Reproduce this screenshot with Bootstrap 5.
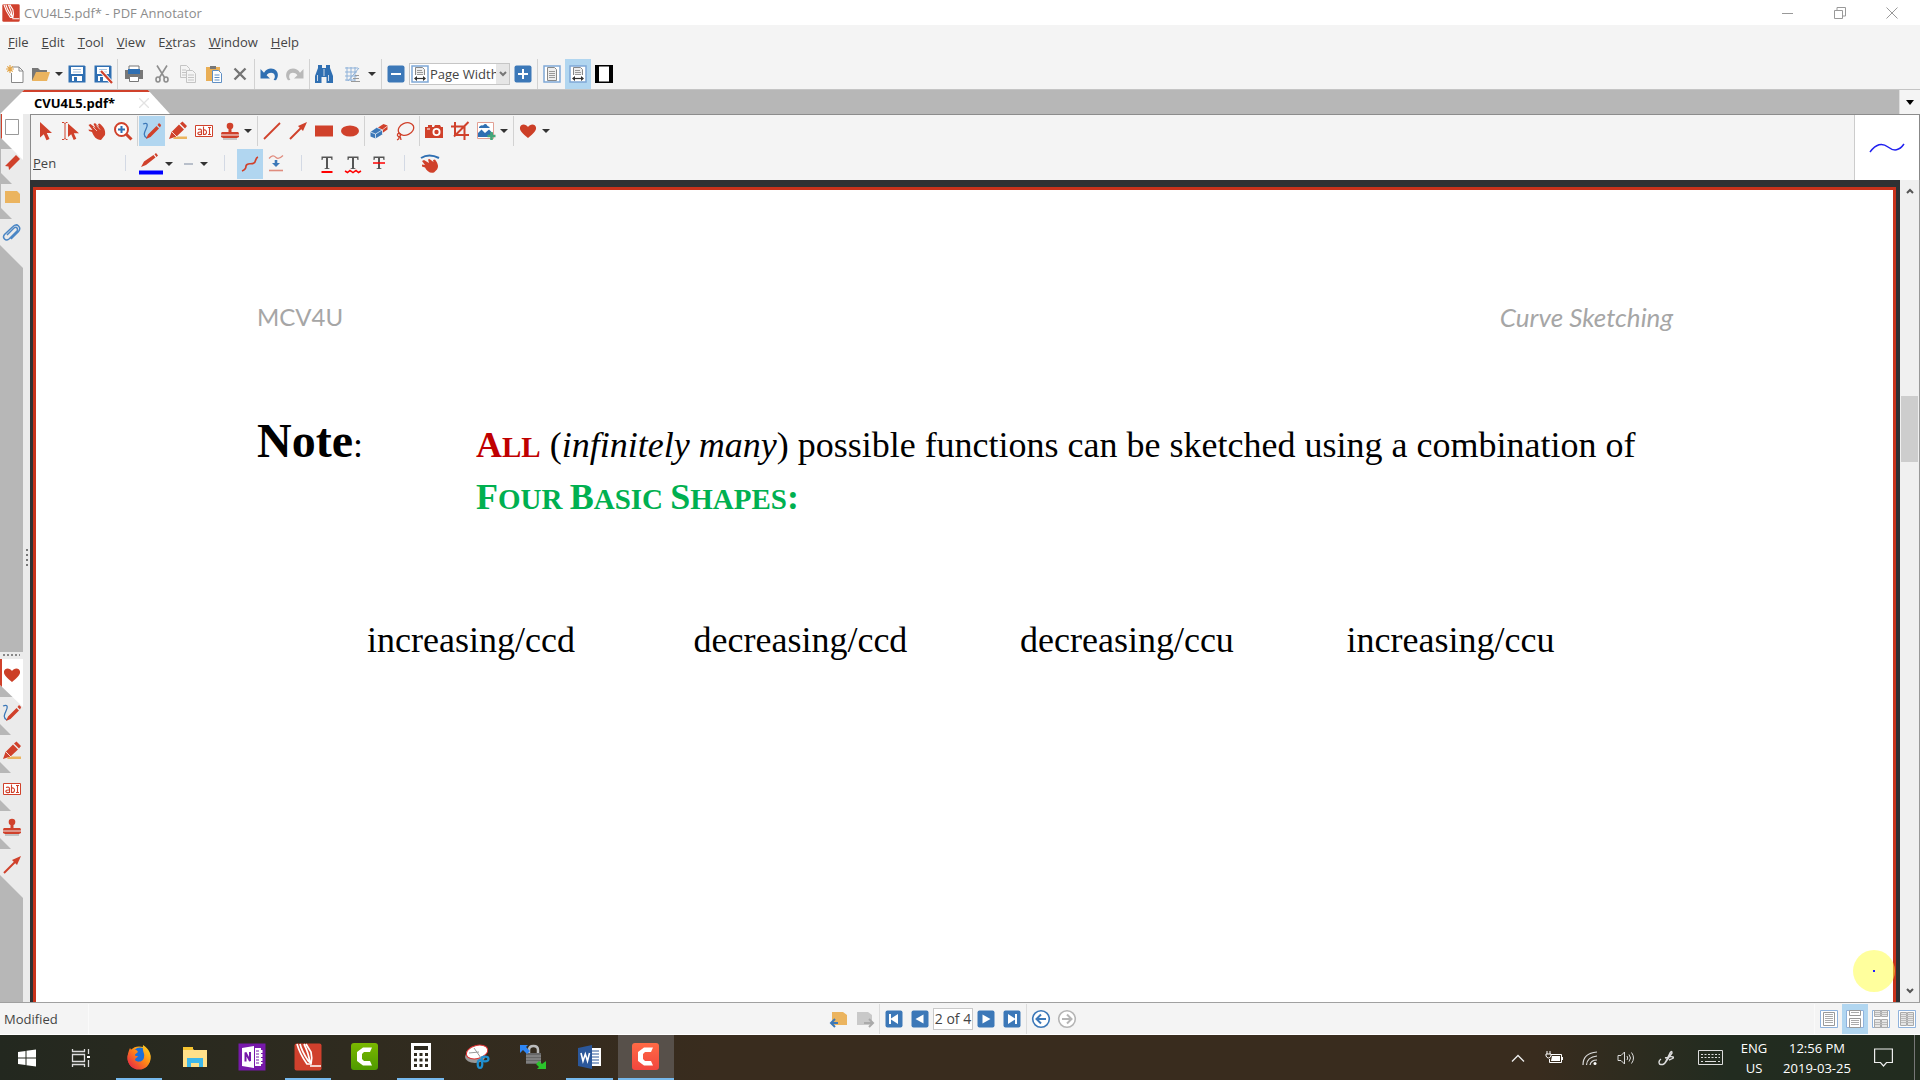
<!DOCTYPE html>
<html lang="en">
<head>
<meta charset="utf-8">
<meta name="viewport" content="width=device-width, initial-scale=1">
<title>CVU4L5.pdf* - PDF Annotator</title>
<link href="https://cdn.jsdelivr.net/npm/bootstrap@5.3.0/dist/css/bootstrap.min.css" rel="stylesheet">
<style>
  :root { --red:#d0412b; --blue:#3c78b8; --pane:#f4f4f4; --strip:#b7b7b7; --tabgrey:#ebebeb; --sel:#b1d6f0; }
  body { font-family:"Open Sans","Noto Sans",sans-serif; font-size:13px; line-height:20px; color:#444; background:var(--pane); }
  button { border:0; background:none; padding:0; color:inherit; }
  svg { display:block; flex:none; }
  .ic { width:20px; height:20px; }
  .titlebar { height:25px; color:#8c8c8c; padding:0 2px; }
  .winbtn { width:52px; height:25px; }
  .menubar { height:32px; padding:1px 8px 0; gap:13px; }
  .menubar a { color:#444; text-decoration:none; }
  .toolbar-main { height:33px; padding:2px 0 0 2px; border-bottom:1px solid #c4c4c4; }
  .tool { width:26px; height:30px; display:flex; align-items:center; justify-content:center; flex:none; }
  .tool.wide { width:30px; }
  .tool.slim { width:22px; }
  .tool.picked { background:var(--sel); }
  .drop { width:13px; height:30px; display:flex; align-items:center; padding-left:1px; flex:none; }
  .drop.near { width:10px; }
  .drop::after { content:""; border:4px solid transparent; border-top-color:#333; border-bottom:0; }
  .rule { width:1px; height:30px; margin:0 1px; background:#d2d2d2; flex:none; }
  .rule.short { height:16px; margin:0 12px; background:#d3d9e4; align-self:center; }
  .zoombox { width:101px; height:22px; border:1px solid #c6c6c6; background:#fff; }
  .zoombox select { appearance:none; border:0; background:none; padding:0; width:66px; color:#444; overflow:hidden; text-overflow:clip; outline:0; }
  .zoombox .arrow { background:#e6e6e6; width:14px; }
  .tabstrip { height:24px; background:var(--strip); }
  .doctab { width:170px; background:#fff; clip-path:polygon(0 100%,24px 0,148px 0,100% 100%); border-top:2px solid var(--red); padding-left:34px; color:#000; font-weight:700; }
  .striplist { width:21px; background:var(--pane); border-left:1px solid #ddd; }
  .sidebar { width:30px; background:var(--tabgrey); }
  .sidecol { width:23px; background:var(--strip); }
  .sidetab { width:23px; height:35px; padding:3px 0 0 2px; background:var(--tabgrey); clip-path:polygon(1px 0,100% 0,100% 100%,12px 100%,1px 24px); display:flex; align-items:flex-start; flex:none; }
  .sidetab.tall { height:38px; padding-top:6px; clip-path:polygon(0 0,100% 0,100% 100%,11px 100%,0 27px); }
  .sidetab.end { height:49px; clip-path:polygon(0 0,100% 0,100% 100%,0 26px); }
  .sidetab.front { height:46px; margin-bottom:-11px; background:#fff; border-left:2px solid var(--red); padding-left:0; z-index:1; clip-path:polygon(1px 0,100% 0,100% 100%,1px 24px); }
  .sidetab.tall.front { height:48px; margin-bottom:-10px; clip-path:polygon(0 0,100% 0,100% 100%,0 26px); }
  .favs { height:350px; }
  .dots { height:7px; background:var(--tabgrey); padding:2px 3px 0 3px; }
  .dots i { display:block; height:2px; background:repeating-linear-gradient(90deg,#888 0 2px,transparent 2px 4px); }
  .grip { width:2px; height:18px; background:repeating-linear-gradient(#777 0 2px,transparent 2px 5px); margin-left:3px; }
  .tools { border-top:1px solid #8c8c8c; border-left:1px solid #8c8c8c; height:66px; }
  .toolrow { height:32px; padding-left:1px; }
  .pen-name { width:81px; padding-left:1px; align-self:center; }
  .preview { width:66px; background:#fff; border-left:1px solid #ccc; border-right:1px solid #888; }
  .desk { background:#2f3133; padding:7px 4px 0 3px; }
  .sheet { background:#fff; border:3px solid #c8321b; border-bottom:0; padding:0 220px 0 221px; font-family:"Liberation Serif",serif; font-size:36px; line-height:52px; color:#000; }
  .sheet-head { font-family:Lato,sans-serif; font-size:26px; line-height:32px; color:#a6a6a6; padding-top:111px; }
  .course { font-size:24px; }
  .note { padding-top:82px; }
  .note-label { width:219px; flex:none; }
  .note-label b { font-size:48px; }
  .caps { font-weight:700; text-transform:uppercase; font-size:29px; line-height:32px; }
  .caps span { font-size:36px; }
  .in-red { color:#c00000; }
  .in-green { color:#00b050; }
  .shapes { padding:91px 0 0 110px; }
  .vscroll { width:20px; background:#f0f0f0; border-right:1px solid #999; }
  .thumb { height:66px; background:#cdcdcd; margin:202px 1px 0 1px; }
  .halo { position:absolute; right:25px; bottom:10px; width:42px; height:42px; border-radius:50%; background:rgba(255,255,60,.5); }
  .status { height:32px; border-top:1px solid #a0a0a0; }
  .status .rule { background:#dcdcdc; }
  .side { flex:1 1 0; }
  .side .rule { background:#fafafa; }
  .state { width:87px; }
  .pageno { width:40px; height:22px; border:1px solid #c9c9c9; padding:0; text-align:center; color:#444; background:#fff; font-size:14px; }
  .midgroup { margin-right:14px; }
  .taskbar { height:46px; border-top:1px solid #fff; color:#fff; background:linear-gradient(90deg,#23281f 0,#2f2b1f 18%,#392c1e 37%,#392c1e 80%,#222c20 90%,#222c1f 100%); }
  .tb-start { width:54px; }
  .apps { width:563px; margin-left:3px; }
  .app { flex:1 1 0; display:flex; align-items:center; justify-content:center; border-bottom:2px solid transparent; position:relative; }
  .app.open::after { content:""; position:absolute; left:5px; right:5px; bottom:-2px; height:2px; background:#76b9ed; }
  .app.current { background:#57504a; }
  .app.current::after { left:0; right:0; }
  .tray { width:36px; }
  .tray-wide { width:44px; }
  .clock { width:82px; }
  .notice { width:50px; }
  .peek { width:6px; border-left:1px solid #777; margin-left:6px; }
</style>
<script src="https://cdn.jsdelivr.net/npm/bootstrap@5.3.0/dist/js/bootstrap.bundle.min.js"></script>
</head>
<body class="vh-100 d-flex flex-column overflow-hidden">

<svg width="0" height="0" class="position-absolute" aria-hidden="true">
  <defs>
  <symbol id="logo" viewBox="0 0 28 28"><rect x=".5" y=".5" width="27" height="27" rx="2" fill="#d0402d"/><path d="M3 1c2 7 5 13 10 20h4c1-4 1-8 0-12L12 1M6 1c2 8 5 12 9 18M10 1c3 6 5 11 6 19M16 23h11" fill="none" stroke="#fff" stroke-width="1.7"/></symbol>
  <symbol id="new" viewBox="0 0 20 20"><path d="M7 3h7l4 4v11.500H6.500V9" fill="#fff" stroke="#888"/><path d="M14 3v4h4" fill="none" stroke="#888"/><path d="M5 1v8M1 5h8M2.300 2.300l5.400 5.400M7.700 2.300L2.300 7.700" stroke="#e3a548" stroke-width="1.200"/></symbol>
  <symbol id="open" viewBox="0 0 20 20"><path d="M1 17V4h6l2 2h7v3H7z" fill="#777"/><path d="M5 8h14l-3 9H1z" fill="#ebb45f"/></symbol>
  <symbol id="save" viewBox="0 0 20 20"><path d="M1.500 1.500h16l1 1v16h-17z" fill="#2f6fb2"/><path d="M4 3h12v7H4z" fill="#fff"/><path d="M6 5.500h8M6 8h8" stroke="#a9c4e0"/><path d="M5 12h10v5H5z" fill="#fff"/><path d="M7 13h3v4H7z" fill="#2f6fb2"/></symbol>
  <symbol id="print" viewBox="0 0 20 20"><path d="M5 2h10v4H5z" fill="#fff" stroke="#777"/><path d="M1 6h18v9H1z" fill="#777"/><path d="M4 5h12v5H4z" fill="#2f6fb2"/><path d="M5.500 12.500h9v5h-9z" fill="#fff" stroke="#777"/></symbol>
  <symbol id="cut" viewBox="0 0 20 20"><g fill="none" stroke="#8e8e8e" stroke-width="1.600"><path d="M5 1.500l7.500 12M15 1.500L7.500 13.500"/><ellipse cx="6" cy="15.500" rx="2" ry="2.500"/><ellipse cx="14" cy="15.500" rx="2" ry="2.500"/></g></symbol>
  <symbol id="copy" viewBox="0 0 20 20"><g fill="#f4f4f4" stroke="#c4c4c4"><path d="M2.500 1.500h6l3 3v9h-9z"/><path d="M8.500 6.500h6l3 3v9h-9z"/><path d="M10 11h6M10 13.500h6M10 16h6M4 6h4M4 8.500h4M4 11h4"/></g></symbol>
  <symbol id="paste" viewBox="0 0 20 20"><path d="M2 3h14v14H2z" fill="#e9ae55"/><path d="M6 2h6v3H6z" fill="#777"/><path d="M8.500 6.500h6l3 3v9h-9z" fill="#fff" stroke="#5f8fc4"/><path d="M10.500 11h5M10.500 13.500h5M10.500 16h5" stroke="#5f8fc4"/></symbol>
  <symbol id="del" viewBox="0 0 20 20"><path d="M4.500 4.500l11 11M15.500 4.500l-11 11" stroke="#757575" stroke-width="2.400"/></symbol>
  <symbol id="undo" viewBox="0 0 20 20"><path d="M1.500 5v9.500h9.500l-3.400-3.200c2.500-3.500 7-3 8-.3.600 2 0 3.500-1 5l2.400.3c2.500-3 2.400-7 .3-9.500C14 3.500 8 3.800 5 8.700z" fill="#2f6fb2"/></symbol>
  <symbol id="redo" viewBox="0 0 20 20"><path transform="matrix(-1 0 0 1 20 0)" d="M1.500 5v9.500h9.500l-3.400-3.200c2.500-3.500 7-3 8-.3.600 2 0 3.500-1 5l2.400.3c2.500-3 2.400-7 .3-9.500C14 3.500 8 3.800 5 8.700z" fill="#b9b9b9"/></symbol>
  <symbol id="bino" viewBox="0 0 20 20"><path d="M4 1h4v3h4V1h4v3l3 8v7h-6.500v-6h-5v6H1v-7l3-8z" fill="#2f6fb2"/><path d="M3.500 11v6M14.500 11v6M10 5v7" stroke="#f4f4f4" stroke-width=".8"/></symbol>
  <symbol id="grid" viewBox="0 0 20 20"><path d="M3 4h13M3 8h12M3 12h12M3 16h10M5 3v14M9 3v14M13 3v14M17 4L6 17" stroke="#8fb2d9" fill="none"/><path d="M9 17.500h9M11 14.500h6M13 11.500h4" stroke="#999"/></symbol>
  <symbol id="minus" viewBox="0 0 20 20"><rect x="1.500" y="1.500" width="17" height="17" rx="2" fill="#3c78b8"/><path d="M5 10h10" stroke="#fff" stroke-width="2"/></symbol>
  <symbol id="plus" viewBox="0 0 20 20"><rect x="1.500" y="1.500" width="17" height="17" rx="2" fill="#3c78b8"/><path d="M5 10h10M10 5v10" stroke="#fff" stroke-width="2"/></symbol>
  <symbol id="pgfull" viewBox="0 0 20 20"><path d="M2 2h16v16H2z" fill="#fff" stroke="#7fa8d6" stroke-width="1.500"/><path d="M5.500 3.500h7l2 2v11h-9z" fill="#eee" stroke="#888"/><path d="M7 7.500h6M7 9.500h6M7 11.500h6M7 13.500h6" stroke="#999"/></symbol>
  <symbol id="pgwidth" viewBox="0 0 20 20"><path d="M2 2h16v16H2z" fill="#fff" stroke="#7fa8d6" stroke-width="1.500"/><path d="M5.500 11V3.500h7l2 2V11" fill="#eee" stroke="#888"/><path d="M7 6.500h5M7 8.500h6M7 10.500h6" stroke="#999"/><path d="M5 14.500h10" stroke="#333" stroke-width="1.200"/><path d="M4 14.500l3-2.500v5zM16 14.500l-3-2.500v5z" fill="#333"/></symbol>
  <symbol id="screen" viewBox="0 0 20 20"><path d="M1 1h18v18H1z" fill="#000"/><path d="M5 2.500h10v15H5z" fill="#fff"/></symbol>
  <symbol id="arrow" viewBox="0 0 20 20"><path d="M5 1v15.500l3.800-3.300 2.700 6 3-1.200-2.700-6H17z" fill="#d0412b"/></symbol>
  <symbol id="tarrow" viewBox="0 0 20 20"><path d="M1 1.500h2l1 1 1-1h1.500M1 18.500h2l1-1 1 1h1.500M4 2v16" stroke="#d0412b" fill="none"/><path d="M7 2.500V16l3.200-2.800 2.500 5.800 2.600-1.200-2.500-5.600h5.200z" fill="#d0412b"/></symbol>
  <symbol id="hand" viewBox="0 0 20 20"><path d="M1.500 4l2-1 5 4-2-4 1.500-1 4 4-1-3 1.500-.5C16 5 19 9 18 14l-4 5c-5-.5-7-3-9-8l-3-1-.5-1.500 4 .5z" fill="#d0412b"/><path d="M6 6l4 4M9.500 4.500l3.500 4" stroke="#f4f4f4" stroke-width=".7"/></symbol>
  <symbol id="zoomin" viewBox="0 0 20 20"><circle cx="8.500" cy="8.500" r="6.500" fill="#fff" stroke="#d0412b" stroke-width="2"/><path d="M13 13l5.500 5.500" stroke="#d0412b" stroke-width="3"/><path d="M5 8.500h7M8.500 5v7" stroke="#2f6fb2" stroke-width="2"/></symbol>
  <symbol id="pen" viewBox="0 0 20 20"><path d="M1 3c5-2 5 1 3 5s-3 7 1 9" fill="none" stroke="#3c78b8" stroke-width="1.300"/><path d="M4 18l2-4.500L14.500 5l2.500 2.500-8.500 8.500zM15.500 4L17 2l2.200 2L18 6.500z" fill="#d0412b"/></symbol>
  <symbol id="marker" viewBox="0 0 20 20"><path d="M7 15.500h12v2.500H5z" fill="#ebb45f"/><path d="M1 18l2.500-7L11 3.500l5 5-7.500 7zM12 2.500l2.500-2L19 5l-2 2.500z" fill="#d0412b"/><path d="M4 11l5 5" stroke="#fff" stroke-width=".8"/></symbol>
  <symbol id="ab" viewBox="0 0 20 20"><path d="M1.500 4.500h17v11h-17z" fill="#fff" stroke="#d0412b"/><g fill="none" stroke="#d0412b" stroke-width="1.100"><path d="M4 8.500c2.500-1 3.500 0 3.500 1.500v3.500c-5 .8-5-3 0-2.500M9.500 5.500v8c4 .8 4-5.500 0-4.500M14 6.500h3M14 13.500h3M15.500 6.500v7"/></g></symbol>
  <symbol id="stamp" viewBox="0 0 20 20"><circle cx="10" cy="5" r="3.300" fill="#d0412b"/><path d="M8.500 7h3v4H18q1 0 1 2.500H1Q1 11 2 11h6.500zM1 14.500h18V16l-2 1H3l-2-1z" fill="#d0412b"/><path d="M3 17.500h14v1H3z" fill="#999"/></symbol>
  <symbol id="line" viewBox="0 0 20 20"><path d="M2 18L18 2" stroke="#d0412b" stroke-width="1.800"/></symbol>
  <symbol id="arr" viewBox="0 0 20 20"><path d="M2 18L14 6" stroke="#d0412b" stroke-width="2"/><path d="M10 5l9-4-4 9z" fill="#d0412b"/></symbol>
  <symbol id="rect" viewBox="0 0 20 20"><path d="M1 4.500h18v11H1z" fill="#d0412b"/></symbol>
  <symbol id="ell" viewBox="0 0 20 20"><ellipse cx="10" cy="10" rx="9" ry="5.500" fill="#d0412b"/></symbol>
  <symbol id="eraser" viewBox="0 0 20 20"><path d="M9 6.500L14.500 3l4 1.500v4L12 13z" fill="#d0412b"/><path d="M1.500 11L8 6.500l5.500 2.300v4.400L6.500 17.500l-5-2z" fill="#3c78b8"/><path d="M1.500 11l5 2 7-4.200 5-3.800M6.500 13v4.500M8 6.500L13.500 9v4" stroke="#fff" stroke-width=".7" fill="none"/></symbol>
  <symbol id="lasso" viewBox="0 0 20 20"><g fill="none" stroke="#d0412b" stroke-width="1.300"><ellipse cx="11" cy="8" rx="8" ry="6" transform="rotate(-25 11 8)"/><circle cx="4" cy="14" r="1.600"/><path d="M4 16c0 2 0 2-2 3M4 15c2 1 2 2 2 4"/></g></symbol>
  <symbol id="camera" viewBox="0 0 20 20"><path d="M1 6h3V4h4v2h2l1-2h5l1 2h2v11H1z" fill="#d0412b"/><circle cx="12.500" cy="11" r="4" fill="#fff"/><circle cx="12.500" cy="11" r="2.200" fill="#d0412b"/><path d="M3 8h3" stroke="#fff"/></symbol>
  <symbol id="crop" viewBox="0 0 20 20"><path d="M5 1v13h14M1 5.500h13.500V19M4 15.500L18.500 1" fill="none" stroke="#d0412b" stroke-width="2"/></symbol>
  <symbol id="image" viewBox="0 0 20 20"><path d="M1.500 1.500h16v16h-16z" fill="#fff" stroke="#e2a094"/><path d="M3 6q2-2.500 4-1.500 3-3 4.500.5l2 1v1H3zM2 16v-4l3.500-3.500L9 12l4-3.500 4 4V16z" fill="#2f6fb2"/><path d="M15.500 11v8M11.500 15h8" stroke="#44a678" stroke-width="2.600"/></symbol>
  <symbol id="heart" viewBox="0 0 20 20"><path d="M10 17C4 12 1.500 9.500 2 6.500 2.500 2.500 8 2.500 10 6c2-3.500 7.500-3.500 8 .5C18.500 9.500 16 12 10 17z" fill="#cc3f27"/></symbol>
  <symbol id="pencolor" viewBox="0 0 26 24"><path d="M3 15l3-5.500L15.500 3l2 2.500L8 13zM16.500 2.200L18 1l2 2.500L18.500 5z" fill="#d0412b"/><path d="M1 18.500h24v4H1z" fill="#0000fe"/></symbol>
  <symbol id="smooth" viewBox="0 0 20 20"><path d="M2 17c3-1 4-3 4-5 1-4 5-1 8-3 2-1 1-5 4-6" fill="none" stroke="#d0412b" stroke-width="1.700"/></symbol>
  <symbol id="press" viewBox="0 0 20 20"><path d="M3 4.500c3-3.500 5-3 7-1s4 1 7-2" fill="none" stroke="#e08c7e" stroke-width="1.200"/><path d="M8.700 6h2.600v3H14l-4 4-4-4h2.700z" fill="#3c78b8"/><path d="M3 16.500h14" stroke="#e08c7e" stroke-width="1.600"/></symbol>
  <symbol id="tee" viewBox="0 0 20 20"><path d="M4.500 2.500h11V6h-1l-.5-2h-3v10l1.500.5v.5h-5v-.5L9 14V4H6l-.5 2h-1z" fill="#555"/></symbol>
  <symbol id="touch" viewBox="0 0 20 20"><path d="M1 4Q9-1 19 4" fill="none" stroke="#2f6fb2" stroke-width="2"/><path d="M2 7l2-1 5 3-1-3.500 1.500-.5 4 3-.5-2 2-.5c3 4 4 7 2 10l-3 3c-4 1-7-1-9-5l-3-1 0-2 3 .5z" fill="#d0412b"/></symbol>
  <symbol id="thumbs" viewBox="0 0 20 20"><path d="M3.500 2.500h13v15h-13z" fill="#fff" stroke="#999"/></symbol>
  <symbol id="bookmark" viewBox="0 0 20 20"><path d="M3 14L14 3l4 4L7 18l-.5-3.500z" fill="#d0412b"/></symbol>
  <symbol id="memo" viewBox="0 0 20 20"><path d="M3 4h12l3 3v9H3z" fill="#ebb45f"/></symbol>
  <symbol id="clip" viewBox="0 0 20 20"><path d="M5 13l7-7q2-1.500 3 0t0 3l-8 8q-2.500 2-4.500 0t0-4.500L11 4.500q3-3 5.500-.5t0 5.500L9 17" fill="none" stroke="#4a86c5" stroke-width="1.500"/></symbol>
  <symbol id="note-prev" viewBox="0 0 20 20"><path d="M3 3h11l4 3v10H3z" fill="#ebb45f"/><path d="M9 14H3M6 10l-4 4 4 4" fill="none" stroke="#3c78b8" stroke-width="2"/></symbol>
  <symbol id="note-next" viewBox="0 0 20 20"><path d="M2 3h11l4 3v10H2z" fill="#c9c9c9"/><path d="M9 14h8M14 10l4 4-4 4" fill="none" stroke="#aaa" stroke-width="2"/></symbol>
  <symbol id="first" viewBox="0 0 20 20"><rect x="1.500" y="1.500" width="17" height="17" rx="2" fill="#3c78b8"/><path d="M5 5h2v4.500L14 5v10l-7-4.500V15H5z" fill="#fff"/></symbol>
  <symbol id="prev" viewBox="0 0 20 20"><rect x="1.500" y="1.500" width="17" height="17" rx="2" fill="#3c78b8"/><path d="M5.500 10l8-4.500v9z" fill="#fff"/></symbol>
  <symbol id="back" viewBox="0 0 20 20"><circle cx="10" cy="10" r="8.300" fill="#fff" stroke="currentColor" stroke-width="1.600"/><path d="M15 10H6M10 5.500L5.500 10l4.500 4.500" fill="none" stroke="currentColor" stroke-width="2"/></symbol>
  <symbol id="v1" viewBox="0 0 20 20"><path d="M1.500 1.500h17v17h-17z" fill="#fff" stroke="#8fb2dc"/><path d="M4.500 3.500h11v13h-11z" fill="#fff" stroke="#999"/><path d="M6 5.500h8M6 7.500h8M6 9.500h8M6 11.500h8M6 13.500h8" stroke="#aaa"/></symbol>
  <symbol id="v2" viewBox="0 0 20 20"><path d="M1.500 1.500h17v17h-17z" fill="#fff" stroke="#8fb2dc"/><path d="M4.500 1.500h11v5h-11zM4.500 9.500h11v9h-11z" fill="#fff" stroke="#999"/><path d="M6 3.500h8M6 11.500h8M6 13.500h8M6 15.500h8" stroke="#aaa"/></symbol>
  <symbol id="v3" viewBox="0 0 20 20"><path d="M1.500 1.500h17v17h-17z" fill="#fff" stroke="#8fb2dc"/><path d="M3.500 1.500h6v6h-6zM10.500 1.500h6v6h-6zM3.500 10.500h6v8h-6zM10.500 10.500h6v8h-6z" fill="#e6e6e6" stroke="#aaa"/><path d="M4 3.500h12M4 5.500h12M4 13.500h12M4 15.500h12" stroke="#bbb"/></symbol>
  <symbol id="v4" viewBox="0 0 20 20"><path d="M1.500 1.500h17v17h-17z" fill="#fff" stroke="#8fb2dc"/><path d="M3.500 3.500h6v13h-6zM10.500 3.500h6v13h-6z" fill="#e6e6e6" stroke="#aaa"/><path d="M4 5.500h12M4 7.500h12M4 9.500h12M4 11.500h12M4 13.500h12" stroke="#bbb"/></symbol>
  <linearGradient id="fox" x1="1" y1="0" x2="0" y2="1"><stop offset="0" stop-color="#ffe226"/><stop offset=".45" stop-color="#ff8a16"/><stop offset="1" stop-color="#e3174f"/></linearGradient>
  <linearGradient id="camg" x1="0" y1="0" x2="0" y2="1"><stop offset="0" stop-color="#7ab800"/><stop offset="1" stop-color="#4f9a00"/></linearGradient>
  <linearGradient id="camr" x1="0" y1="0" x2="0" y2="1"><stop offset="0" stop-color="#ff6a45"/><stop offset="1" stop-color="#f2463e"/></linearGradient>
  </defs>
</svg>

<header class="titlebar bg-white d-flex align-items-center">
  <svg width="18" height="18"><use href="#logo"/></svg>
  <span class="ms-1 me-auto">CVU4L5.pdf* - PDF Annotator</span>
  <button class="winbtn d-flex align-items-center justify-content-center" aria-label="Minimize"><svg width="12" height="12" stroke="#999"><path d="M0 6.500h11"/></svg></button>
  <button class="winbtn d-flex align-items-center justify-content-center" aria-label="Restore"><svg width="12" height="12" fill="none" stroke="#999"><path d="M.5 3.500h8v8h-8zM3 3V.5h8.500V9H9"/></svg></button>
  <button class="winbtn d-flex align-items-center justify-content-center" aria-label="Close"><svg width="12" height="12" stroke="#999"><path d="M.5.5l11 11M11.500.5l-11 11"/></svg></button>
</header>

<nav class="menubar d-flex align-items-center" aria-label="Menu">
  <a href="#"><u>F</u>ile</a><a href="#"><u>E</u>dit</a><a href="#"><u>T</u>ool</a><a href="#"><u>V</u>iew</a><a href="#">E<u>x</u>tras</a><a href="#"><u>W</u>indow</a><a href="#"><u>H</u>elp</a>
</nav>

<div class="toolbar-main d-flex align-items-center" role="toolbar" aria-label="Standard">
  <button class="tool" aria-label="New"><svg class="ic"><use href="#new"/></svg></button>
  <button class="tool" aria-label="Open"><svg class="ic"><use href="#open"/></svg></button>
  <button class="drop near" aria-label="Recent files"></button>
  <button class="tool" aria-label="Save"><svg class="ic"><use href="#save"/></svg></button>
  <button class="tool" aria-label="Save as"><svg class="ic" viewBox="0 0 20 20"><use href="#save"/><path d="M8 7l10 11" stroke="#fff" stroke-width="4"/><path d="M8 7l11 12" stroke="#d0412b" stroke-width="2.200"/></svg></button>
  <span class="rule"></span>
  <button class="tool wide" aria-label="Print"><svg class="ic"><use href="#print"/></svg></button>
  <button class="tool" aria-label="Cut"><svg class="ic"><use href="#cut"/></svg></button>
  <button class="tool" aria-label="Copy"><svg class="ic"><use href="#copy"/></svg></button>
  <button class="tool" aria-label="Paste"><svg class="ic"><use href="#paste"/></svg></button>
  <button class="tool" aria-label="Delete"><svg class="ic"><use href="#del"/></svg></button>
  <span class="rule"></span>
  <button class="tool" aria-label="Undo"><svg class="ic"><use href="#undo"/></svg></button>
  <button class="tool" aria-label="Redo"><svg class="ic"><use href="#redo"/></svg></button>
  <span class="rule"></span>
  <button class="tool" aria-label="Find"><svg class="ic"><use href="#bino"/></svg></button>
  <button class="tool wide" aria-label="Grid"><svg class="ic"><use href="#grid"/></svg></button>
  <button class="drop" aria-label="Grid options"></button>
  <span class="rule"></span>
  <button class="tool" aria-label="Zoom out"><svg class="ic"><use href="#minus"/></svg></button>
  <div class="zoombox d-flex align-items-center">
    <svg class="ic"><use href="#pgwidth"/></svg>
    <select aria-label="Zoom"><option>Page Width</option></select>
    <span class="arrow h-100 d-flex align-items-center justify-content-center"><svg width="8" height="6" fill="none" stroke="#777" stroke-width="2"><path d="M1 1l3 3 3-3"/></svg></span>
  </div>
  <button class="tool" aria-label="Zoom in"><svg class="ic"><use href="#plus"/></svg></button>
  <span class="rule"></span>
  <button class="tool" aria-label="Full page"><svg class="ic"><use href="#pgfull"/></svg></button>
  <button class="tool picked" aria-label="Page width"><svg class="ic"><use href="#pgwidth"/></svg></button>
  <button class="tool" aria-label="Full screen"><svg class="ic"><use href="#screen"/></svg></button>
</div>

<div class="tabstrip d-flex">
  <a href="#" class="doctab d-flex align-items-center text-decoration-none">CVU4L5.pdf*
    <svg class="ms-4" width="10" height="10" stroke="#e2e2e2" stroke-width="1.300"><path d="M0 0l10 10M10 0L0 10"/></svg></a>
  <button class="striplist ms-auto d-flex align-items-center justify-content-center" aria-label="Document list"><svg width="8" height="5"><path d="M0 0h8L4 5z"/></svg></button>
</div>

<div class="d-flex flex-grow-1 overflow-hidden">
  <aside class="sidebar d-flex flex-shrink-0 align-items-center">
    <div class="sidecol h-100 d-flex flex-column">
      <button class="sidetab front" aria-label="Pages"><svg class="ic"><use href="#thumbs"/></svg></button>
      <button class="sidetab" aria-label="Bookmarks"><svg class="ic"><use href="#bookmark"/></svg></button>
      <button class="sidetab" aria-label="Annotations"><svg class="ic"><use href="#memo"/></svg></button>
      <button class="sidetab end" aria-label="Attachments"><svg class="ic"><use href="#clip"/></svg></button>
      <div class="favs mt-auto d-flex flex-column">
        <div class="dots"><i></i></div>
        <button class="sidetab tall front" aria-label="Favorites"><svg class="ic"><use href="#heart"/></svg></button>
        <button class="sidetab tall" aria-label="Pen"><svg class="ic"><use href="#pen"/></svg></button>
        <button class="sidetab tall" aria-label="Marker"><svg class="ic"><use href="#marker"/></svg></button>
        <button class="sidetab tall" aria-label="Text"><svg class="ic"><use href="#ab"/></svg></button>
        <button class="sidetab tall" aria-label="Stamp"><svg class="ic"><use href="#stamp"/></svg></button>
        <button class="sidetab tall end" aria-label="Arrow"><svg class="ic"><use href="#arr"/></svg></button>
      </div>
    </div>
    <span class="grip"></span>
  </aside>

  <div class="d-flex flex-column flex-grow-1">
    <div class="tools d-flex flex-shrink-0">
      <div class="flex-grow-1">
        <div class="toolrow d-flex align-items-center" role="toolbar" aria-label="Tools">
          <button class="tool" aria-label="Select"><svg class="ic"><use href="#arrow"/></svg></button>
          <button class="tool" aria-label="Select text"><svg class="ic"><use href="#tarrow"/></svg></button>
          <button class="tool" aria-label="Pan"><svg class="ic"><use href="#hand"/></svg></button>
          <button class="tool" aria-label="Magnify"><svg class="ic"><use href="#zoomin"/></svg></button>
          <span class="rule"></span>
          <button class="tool picked" aria-label="Pen"><svg class="ic"><use href="#pen"/></svg></button>
          <button class="tool" aria-label="Marker"><svg class="ic"><use href="#marker"/></svg></button>
          <button class="tool" aria-label="Text"><svg class="ic"><use href="#ab"/></svg></button>
          <button class="tool" aria-label="Stamp"><svg class="ic"><use href="#stamp"/></svg></button>
          <button class="drop" aria-label="Stamps"></button>
          <span class="rule"></span>
          <button class="tool" aria-label="Line"><svg class="ic"><use href="#line"/></svg></button>
          <button class="tool" aria-label="Arrow"><svg class="ic"><use href="#arr"/></svg></button>
          <button class="tool" aria-label="Rectangle"><svg class="ic"><use href="#rect"/></svg></button>
          <button class="tool" aria-label="Ellipse"><svg class="ic"><use href="#ell"/></svg></button>
          <span class="rule"></span>
          <button class="tool" aria-label="Eraser"><svg class="ic"><use href="#eraser"/></svg></button>
          <button class="tool" aria-label="Lasso"><svg class="ic"><use href="#lasso"/></svg></button>
          <span class="rule"></span>
          <button class="tool" aria-label="Snapshot"><svg class="ic"><use href="#camera"/></svg></button>
          <button class="tool" aria-label="Crop"><svg class="ic"><use href="#crop"/></svg></button>
          <button class="tool" aria-label="Insert image"><svg class="ic"><use href="#image"/></svg></button>
          <button class="drop" aria-label="Image options"></button>
          <span class="rule"></span>
          <button class="tool" aria-label="Favorites"><svg class="ic"><use href="#heart"/></svg></button>
          <button class="drop" aria-label="Favorite tools"></button>
        </div>
        <div class="toolrow d-flex align-items-end" role="toolbar" aria-label="Pen options">
          <span class="pen-name"><u>P</u>en</span>
          <span class="rule short"></span>
          <button class="tool" aria-label="Color"><svg width="26" height="24"><use href="#pencolor"/></svg></button>
          <button class="drop" aria-label="Colors"></button>
          <button class="tool slim" aria-label="Width"><svg width="9" height="3"><path d="M0 0h9v2H0z" fill="#b8bfca"/></svg></button>
          <button class="drop" aria-label="Widths"></button>
          <span class="rule short"></span>
          <button class="tool picked" aria-label="Smooth"><svg class="ic"><use href="#smooth"/></svg></button>
          <button class="tool" aria-label="Pressure"><svg class="ic"><use href="#press"/></svg></button>
          <span class="rule short"></span>
          <button class="tool" aria-label="Underline"><svg class="ic" viewBox="0 0 20 20"><use href="#tee"/><path d="M4.500 18h11" stroke="#f00" stroke-width="2"/></svg></button>
          <button class="tool" aria-label="Wavy underline"><svg class="ic" viewBox="0 0 20 20"><use href="#tee"/><path d="M2 17l2.500 1.500L7 16.500l3 2 3-2 2.500 2L18 17" stroke="#f00" stroke-width="1.500" fill="none"/></svg></button>
          <button class="tool" aria-label="Strike out"><svg class="ic" viewBox="0 0 20 20"><use href="#tee"/><path d="M4 9h12" stroke="#f00" stroke-width="1.500"/></svg></button>
          <span class="rule short"></span>
          <button class="tool" aria-label="Touch"><svg class="ic"><use href="#touch"/></svg></button>
        </div>
      </div>
      <div class="preview d-flex align-items-center justify-content-center"><svg width="36" height="12" fill="none" stroke="#2020f0" stroke-width="1.500"><path d="M1 10Q10-2 19 5t16-3"/></svg></div>
    </div>

    <div class="d-flex flex-grow-1 overflow-hidden position-relative">
      <main class="desk flex-grow-1 d-flex">
        <article class="sheet flex-grow-1">
          <div class="sheet-head d-flex justify-content-between"><span class="course">MCV4U</span><em>Curve Sketching</em></div>
          <div class="note d-flex align-items-baseline">
            <div class="note-label"><b>Note</b>:</div>
            <div><span class="caps in-red"><span>A</span>ll</span> (<i>infinitely many</i>) possible functions can be sketched using a combination of<br><span class="caps in-green"><span>F</span>our <span>B</span>asic <span>S</span>hapes<span>:</span></span></div>
          </div>
          <div class="shapes"><div class="row g-0">
            <div class="col-3">increasing/ccd</div><div class="col-3">decreasing/ccd</div><div class="col-3">decreasing/ccu</div><div class="col-3">increasing/ccu</div>
          </div></div>
        </article>
      </main>
      <div class="vscroll d-flex flex-column flex-shrink-0">
        <svg class="mx-auto mt-2" width="8" height="6" fill="none" stroke="#555" stroke-width="2"><path d="M1 5l3-3 3 3"/></svg>
        <div class="thumb"></div>
        <svg class="mx-auto mt-auto mb-2" width="8" height="6" fill="none" stroke="#555" stroke-width="2"><path d="M1 1l3 3 3-3"/></svg>
      </div>
      <div class="halo d-flex align-items-center justify-content-center"><svg width="2" height="2"><path d="M0 0h2v2H0z" fill="#22f"/></svg></div>
    </div>
  </div>
</div>

<footer class="status d-flex align-items-center flex-shrink-0">
  <div class="side d-flex align-items-center"><span class="state ps-1">Modified</span><span class="rule"></span></div>
  <div class="midgroup d-flex align-items-center">
    <button class="tool" aria-label="Previous annotated page"><svg class="ic"><use href="#note-prev"/></svg></button>
    <button class="tool" aria-label="Next annotated page"><svg class="ic"><use href="#note-next"/></svg></button>
    <span class="rule"></span>
    <button class="tool" aria-label="First page"><svg class="ic"><use href="#first"/></svg></button>
    <button class="tool" aria-label="Previous page"><svg class="ic"><use href="#prev"/></svg></button>
    <input class="pageno" aria-label="Page" value="2 of 4">
    <button class="tool" aria-label="Next page"><svg class="ic" viewBox="0 0 20 20"><use href="#prev" transform="rotate(180 10 10)"/></svg></button>
    <button class="tool" aria-label="Last page"><svg class="ic" viewBox="0 0 20 20"><use href="#first" transform="rotate(180 10 10)"/></svg></button>
    <span class="rule"></span>
    <button class="tool" aria-label="Back"><svg class="ic" color="#3c78b8"><use href="#back"/></svg></button>
    <button class="tool" aria-label="Forward"><svg class="ic" viewBox="0 0 20 20" color="#b5b5b5"><use href="#back" transform="rotate(180 10 10)"/></svg></button>
  </div>
  <div class="side d-flex align-items-center justify-content-end">
    <span class="rule"></span>
    <button class="tool" aria-label="Single page"><svg class="ic"><use href="#v1"/></svg></button>
    <button class="tool picked" aria-label="Continuous"><svg class="ic"><use href="#v2"/></svg></button>
    <button class="tool" aria-label="Two page continuous"><svg class="ic"><use href="#v3"/></svg></button>
    <button class="tool" aria-label="Two pages"><svg class="ic"><use href="#v4"/></svg></button>
  </div>
</footer>

<div class="taskbar d-flex flex-shrink-0">
  <button class="tb-start d-flex align-items-center justify-content-center" aria-label="Start"><svg width="18" height="18" fill="#fff"><path d="M0 3l7.500-1v6.500H0zM8.500 1.800L18 .5v8H8.500zM0 9.500h7.500V16L0 15zM8.500 9.500H18v8l-9.500-1.300z"/></svg></button>
  <button class="tb-start d-flex align-items-center justify-content-center" aria-label="Task view"><svg width="20" height="20" fill="none" stroke="#ddd"><path d="M1.500 1v2.500h12V1M1.500 19v-2.500h12V19M1.500 6.500h12v7h-12zM17.500 1v5M17.500 12v7" stroke-width="1.300"/><path d="M16 8h3v2h-3z" fill="#fff" stroke="none"/></svg></button>
  <div class="apps d-flex">
    <button class="app open" aria-label="Firefox"><svg width="26" height="26" viewBox="0 0 26 26"><circle cx="13" cy="14" r="11.500" fill="url(#fox)"/><circle cx="14" cy="11" r="7.500" fill="#1b6fd8"/><path d="M17 1c6 4 9 9 7 16-2 5-6 8-11 8C6 25 1 20 1.500 13 2 9 3 6 4 4l1.500 2.500C8 5 10 5 12 8l-3 2.500c0 2 1 1.500 3 1.500-1 2-3 2-3 4 2 3 9 2 9-3 1-4-2-5-1-12z" fill="url(#fox)"/></svg></button>
    <button class="app" aria-label="File Explorer"><svg width="26" height="22"><path d="M1 2h9l2 2h13v17H1z" fill="#ffe08a"/><path d="M1 1h10v3H1z" fill="#f6c430"/><path d="M5 21v-9h16v9h-4v-4H9v4z" fill="#3db7ea"/></svg></button>
    <button class="app" aria-label="OneNote"><svg width="28" height="28"><path d="M.5.5h27v27H.5z" fill="#7719aa"/><path d="M4 5l12-2v22L4 23zM17 5h6v18h-6z" fill="#fff"/><path d="M7.500 18.500v-9l4.500 8.500V9" fill="none" stroke="#7719aa" stroke-width="2"/><path d="M18 8h3M18 11h3M18 14h3M18 17h3M18 20h3" stroke="#7719aa"/><path d="M23.500 7v14" stroke="#fff" stroke-width="2" stroke-dasharray="3 1"/></svg></button>
    <button class="app open" aria-label="PDF Annotator"><svg width="28" height="28"><use href="#logo"/></svg></button>
    <button class="app" aria-label="Camtasia"><svg width="27" height="27"><rect width="27" height="27" rx="3" fill="url(#camg)"/><path d="M21 4.500h-9L6 9v9l6 4.500h9L19 18h-6l-2-2v-5l2-2h6z" fill="#fff"/></svg></button>
    <button class="app open" aria-label="Calculator"><svg width="20" height="27"><path d="M0 0h20v27H0z" fill="#fff"/><path d="M3 3h14v4H3zM3 10h3v3H3zM8.500 10h3v3h-3zM14 10h3v3h-3zM3 15.500h3v3H3zM8.500 15.500h3v3h-3zM14 15.500h3v3h-3zM3 21h3v3H3zM8.500 21h3v3h-3zM14 21h3v3h-3z" fill="#2e2a1f"/></svg></button>
    <button class="app" aria-label="Snipping Tool"><svg width="26" height="26"><ellipse cx="11" cy="13" rx="10" ry="6" fill="#999"/><ellipse cx="13" cy="8" rx="11" ry="6.500" transform="rotate(-15 13 8)" fill="#fff" stroke="#d33"/><path d="M10 4l7 10M5 9l10-1" stroke="#999" fill="none"/><g fill="none" stroke="#1f8fd0" stroke-width="2.200"><ellipse cx="21" cy="15" rx="3.500" ry="2.300"/><ellipse cx="16" cy="20" rx="2.300" ry="4"/></g></svg></button>
    <button class="app" aria-label="Secure transfer"><svg width="26" height="26"><path d="M9 10V6q0-4 4.500-4T18 6v4" fill="none" stroke="#bbb" stroke-width="2.500"/><path d="M6 9h15v11H6z" fill="#666"/><path d="M6 12h15M6 15h15M6 18h15" stroke="#999"/><path d="M0 1h8L6 3l4 4-3 3-4-4-3 3z" fill="#2e86f5"/><path d="M26 25h-9l2-2-3-3 3-3 3 3 4-3z" fill="#2bc32b"/></svg></button>
    <button class="app open" aria-label="Word"><svg width="24" height="24" viewBox="0 0 24 24"><path d="M12 3h11v18H12z" fill="#fff"/><path d="M14 6h7M14 9h7M14 12h7M14 15h7M14 18h7" stroke="#2b579a"/><path d="M0 3l14-3v24L0 21z" fill="#2b579a"/><path d="M3 8l2 8 2.300-7 2.200 7 2-8" fill="none" stroke="#fff" stroke-width="1.600"/></svg></button>
    <button class="app open current" aria-label="Camtasia Recorder"><svg width="27" height="27"><rect width="27" height="27" rx="3" fill="url(#camr)"/><path d="M21 4.500h-9L6 9v9l6 4.500h9L19 18h-6l-2-2v-5l2-2h6z" fill="#fff"/></svg></button>
  </div>
  <div class="ms-auto d-flex align-items-stretch text-center">
    <button class="tray d-flex align-items-center justify-content-center" aria-label="Show hidden icons"><svg width="14" height="8" fill="none" stroke="#eee" stroke-width="1.300"><path d="M1 7.500l6-6 6 6"/></svg></button>
    <button class="tray d-flex align-items-center justify-content-center" aria-label="Battery"><svg width="18" height="14" fill="none" stroke="#fff"><path d="M6 3.500h10.500v8H4.500V8M17.500 6v3M2 0v3M5 0v3M1 3h5v2q-1 2-2.500 2T1 5z"/><path d="M7 5h8v5H6z" fill="#fff" stroke="none"/></svg></button>
    <button class="tray d-flex align-items-center justify-content-center" aria-label="Wi-Fi"><svg width="16" height="16" fill="none" stroke="#ddd"><path d="M1 15Q1 3 15 2M4.500 15Q5 7 15 6M8 15q1-5 7-5" stroke-width="1.200"/><circle cx="13" cy="13.500" r="1.500" fill="#fff" stroke="none"/></svg></button>
    <button class="tray d-flex align-items-center justify-content-center" aria-label="Volume"><svg width="18" height="14" fill="none" stroke="#ddd"><path d="M1 4.500h3L7.500 1v12L4 9.500H1zM10 5q1.500 2 0 4M12 3.500q3 3.500 0 7M14.500 1.500q4 5.500 0 11"/></svg></button>
    <button class="tray-wide d-flex align-items-center justify-content-center" aria-label="Ink"><svg width="16" height="16" fill="none" stroke="#ddd" stroke-width="1.400"><path d="M3 9q-3 2-1.500 5Q6 16 8 11L12 3q2-3 2 0L7 13M7 8q6-2 8-1t-4 3"/></svg></button>
    <button class="tray-wide d-flex align-items-center justify-content-center" aria-label="Touch keyboard"><svg width="25" height="15" fill="none" stroke="#ddd"><path d="M.5.5h24v14H.5z"/><path d="M3 4.500h19M3 7.500h19" stroke-dasharray="2 1.500"/><path d="M3 11.500h2M7 11.500h11M20 11.500h2"/></svg></button>
    <button class="tray-wide" aria-label="Language">ENG<br>US</button>
    <button class="clock">12:56 PM<br>2019-03-25</button>
    <button class="notice d-flex align-items-center justify-content-center" aria-label="Notifications"><svg width="19" height="19" fill="none" stroke="#eee" stroke-width="1.200"><path d="M.6 1h17.800v13.500h-5.900L9.500 18l-3-3.500H.6z"/></svg></button>
    <span class="peek"></span>
  </div>
</div>
</body>
</html>
